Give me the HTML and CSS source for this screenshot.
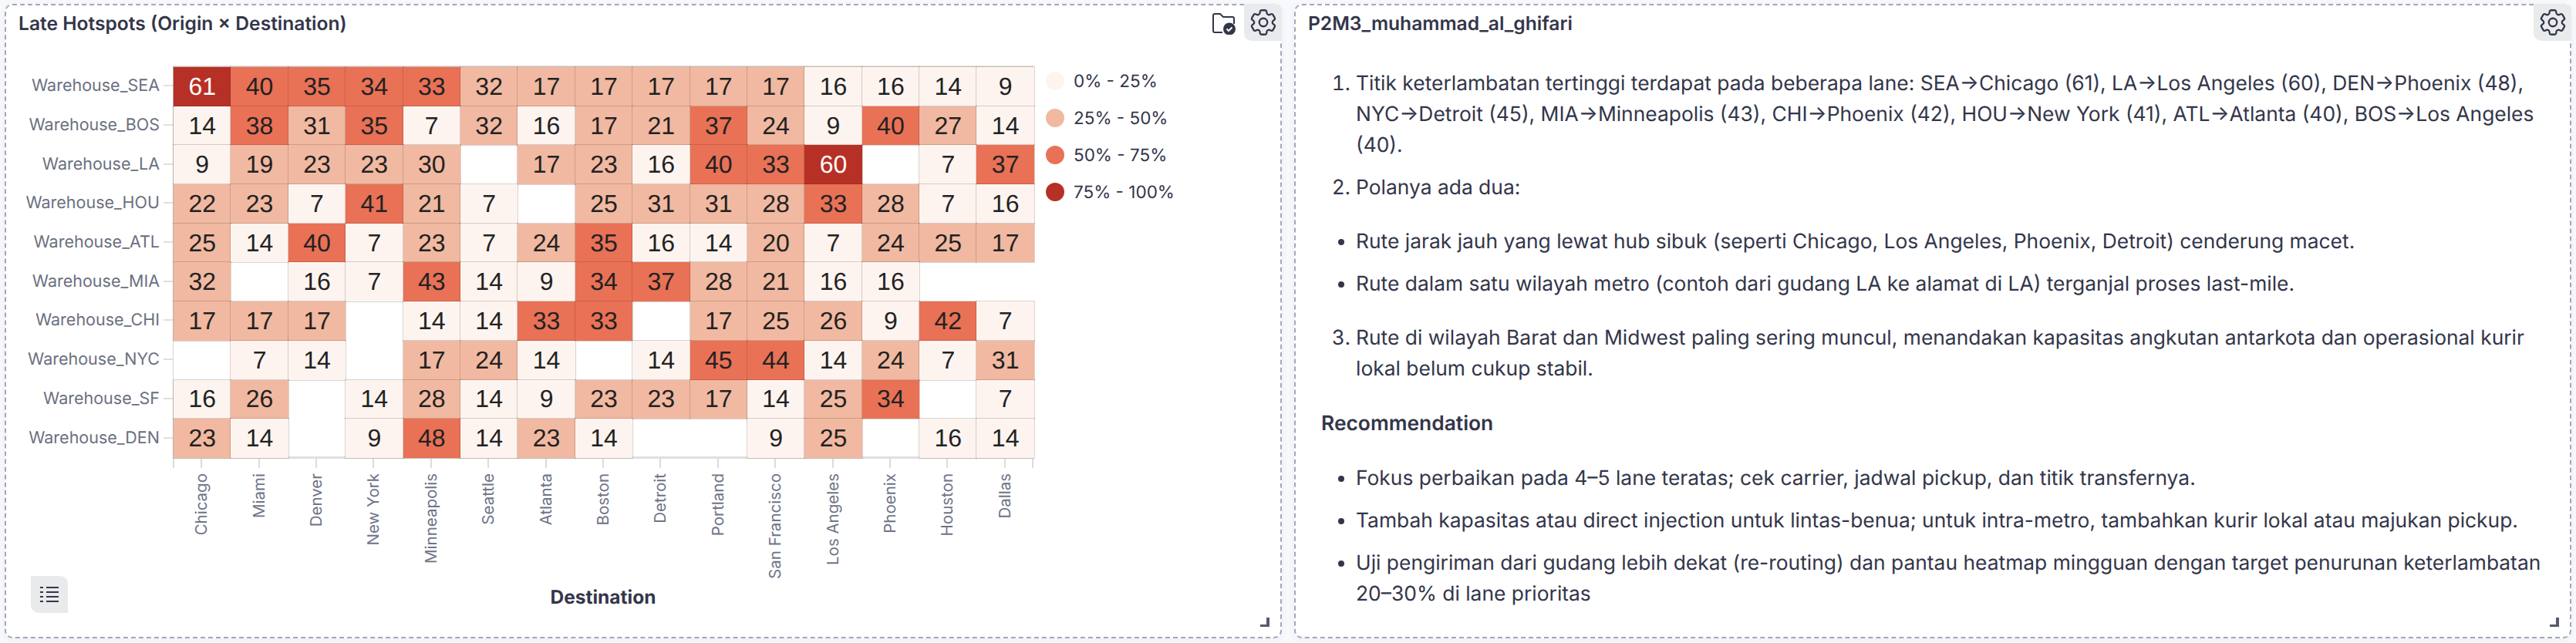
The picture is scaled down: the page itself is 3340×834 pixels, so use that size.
FILE: index.html
```html
<!DOCTYPE html>
<html lang="id">
<head>
    <meta charset="UTF-8">
    <meta name="viewport" content="width=device-width, initial-scale=1.0">
    <title>Late Hotspots</title>
    <link rel="stylesheet" href="styles.css">
</head>
<body>
    <section class="panel">
        <header class="panel-head">
            <h2 class="panel-title">Late Hotspots (Origin × Destination)</h2>
            <svg class="folder-icon" viewBox="0 0 30 28" fill="none">
                <path d="M13 25H3a2 2 0 0 1-2-2V3a2 2 0 0 1 2-2h7l4 4h12a2 2 0 0 1 2 2v7" stroke="#33364a" stroke-width="2"/>
                <circle cx="22" cy="20.500" r="8" fill="#33364a"/>
                <path d="M18.500 20.500l2.500 2.500 4.500-4.500" stroke="#fff" stroke-width="2"/>
            </svg>
            <button class="icon-btn" type="button">
                <svg class="gear-icon" viewBox="0 0 24 24" fill="none" stroke="#33364a" stroke-width="1.300">
                    <path d="M9.594 3.940c.09-.542.56-.94 1.110-.94h2.593c.55 0 1.020.398 1.110.94l.213 1.281c.063.374.313.686.645.87.074.04.147.083.22.127.325.196.72.257 1.075.124l1.217-.456a1.125 1.125 0 0 1 1.370.49l1.296 2.247a1.125 1.125 0 0 1-.26 1.431l-1.003.827c-.293.241-.438.613-.43.992a7.723 7.723 0 0 1 0 .255c-.008.378.137.75.43.991l1.004.827c.424.35.534.955.26 1.430l-1.298 2.247a1.125 1.125 0 0 1-1.369.491l-1.217-.456c-.355-.133-.75-.072-1.076.124a6.470 6.470 0 0 1-.22.128c-.331.183-.581.495-.644.869l-.213 1.281c-.09.543-.56.94-1.110.94h-2.594c-.55 0-1.019-.398-1.110-.94l-.213-1.281c-.062-.374-.312-.686-.644-.87a6.520 6.520 0 0 1-.22-.127c-.325-.196-.72-.257-1.076-.124l-1.217.456a1.125 1.125 0 0 1-1.369-.49l-1.297-2.247a1.125 1.125 0 0 1 .26-1.431l1.004-.827c.292-.24.437-.613.43-.991a6.932 6.932 0 0 1 0-.255c.007-.38-.138-.751-.43-.992l-1.004-.827a1.125 1.125 0 0 1-.26-1.430l1.297-2.247a1.125 1.125 0 0 1 1.370-.491l1.216.456c.356.133.751.072 1.076-.124.072-.044.146-.086.22-.128.332-.183.582-.495.644-.869l.214-1.280Z"/>
                    <path d="M15 12a3 3 0 1 1-6 0 3 3 0 0 1 6 0Z"/>
                </svg>
            </button>
        </header>

        <div class="chart">
            <div class="y-axis">
                <div class="y-row"><span>Warehouse_SEA</span><i></i></div>
                <div class="y-row"><span>Warehouse_BOS</span><i></i></div>
                <div class="y-row"><span>Warehouse_LA</span><i></i></div>
                <div class="y-row"><span>Warehouse_HOU</span><i></i></div>
                <div class="y-row"><span>Warehouse_ATL</span><i></i></div>
                <div class="y-row"><span>Warehouse_MIA</span><i></i></div>
                <div class="y-row"><span>Warehouse_CHI</span><i></i></div>
                <div class="y-row"><span>Warehouse_NYC</span><i></i></div>
                <div class="y-row"><span>Warehouse_SF</span><i></i></div>
                <div class="y-row"><span>Warehouse_DEN</span><i></i></div>
            </div>

            <div class="plot">
                <div class="heat-grid">
                    <!-- SEA -->
                    <div class="c c4">61</div><div class="c c3">40</div><div class="c c3">35</div><div class="c c3">34</div><div class="c c3">33</div><div class="c c2">32</div><div class="c c2">17</div><div class="c c2">17</div><div class="c c2">17</div><div class="c c2">17</div><div class="c c2">17</div><div class="c c1">16</div><div class="c c1">16</div><div class="c c1">14</div><div class="c c1">9</div>
                    <!-- BOS -->
                    <div class="c c1">14</div><div class="c c3">38</div><div class="c c2">31</div><div class="c c3">35</div><div class="c c1">7</div><div class="c c2">32</div><div class="c c1">16</div><div class="c c2">17</div><div class="c c2">21</div><div class="c c3">37</div><div class="c c2">24</div><div class="c c1">9</div><div class="c c3">40</div><div class="c c2">27</div><div class="c c1">14</div>
                    <!-- LA -->
                    <div class="c c1">9</div><div class="c c2">19</div><div class="c c2">23</div><div class="c c2">23</div><div class="c c2">30</div><div class="c"></div><div class="c c2">17</div><div class="c c2">23</div><div class="c c1">16</div><div class="c c3">40</div><div class="c c3">33</div><div class="c c4">60</div><div class="c"></div><div class="c c1">7</div><div class="c c3">37</div>
                    <!-- HOU -->
                    <div class="c c2">22</div><div class="c c2">23</div><div class="c c1">7</div><div class="c c3">41</div><div class="c c2">21</div><div class="c c1">7</div><div class="c"></div><div class="c c2">25</div><div class="c c2">31</div><div class="c c2">31</div><div class="c c2">28</div><div class="c c3">33</div><div class="c c2">28</div><div class="c c1">7</div><div class="c c1">16</div>
                    <!-- ATL -->
                    <div class="c c2">25</div><div class="c c1">14</div><div class="c c3">40</div><div class="c c1">7</div><div class="c c2">23</div><div class="c c1">7</div><div class="c c2">24</div><div class="c c3">35</div><div class="c c1">16</div><div class="c c1">14</div><div class="c c2">20</div><div class="c c1">7</div><div class="c c2">24</div><div class="c c2">25</div><div class="c c2">17</div>
                    <!-- MIA -->
                    <div class="c c2">32</div><div class="c"></div><div class="c c1">16</div><div class="c c1">7</div><div class="c c3">43</div><div class="c c1">14</div><div class="c c1">9</div><div class="c c3">34</div><div class="c c3">37</div><div class="c c2">28</div><div class="c c2">21</div><div class="c c1">16</div><div class="c c1">16</div><div class="c"></div><div class="c"></div>
                    <!-- CHI -->
                    <div class="c c2">17</div><div class="c c2">17</div><div class="c c2">17</div><div class="c"></div><div class="c c1">14</div><div class="c c1">14</div><div class="c c3">33</div><div class="c c3">33</div><div class="c"></div><div class="c c2">17</div><div class="c c2">25</div><div class="c c2">26</div><div class="c c1">9</div><div class="c c3">42</div><div class="c c1">7</div>
                    <!-- NYC -->
                    <div class="c"></div><div class="c c1">7</div><div class="c c1">14</div><div class="c"></div><div class="c c2">17</div><div class="c c2">24</div><div class="c c1">14</div><div class="c"></div><div class="c c1">14</div><div class="c c3">45</div><div class="c c3">44</div><div class="c c1">14</div><div class="c c2">24</div><div class="c c1">7</div><div class="c c2">31</div>
                    <!-- SF -->
                    <div class="c c1">16</div><div class="c c2">26</div><div class="c"></div><div class="c c1">14</div><div class="c c2">28</div><div class="c c1">14</div><div class="c c1">9</div><div class="c c2">23</div><div class="c c2">23</div><div class="c c2">17</div><div class="c c1">14</div><div class="c c2">25</div><div class="c c3">34</div><div class="c"></div><div class="c c1">7</div>
                    <!-- DEN -->
                    <div class="c c2">23</div><div class="c c1">14</div><div class="c"></div><div class="c c1">9</div><div class="c c3">48</div><div class="c c1">14</div><div class="c c2">23</div><div class="c c1">14</div><div class="c"></div><div class="c"></div><div class="c c1">9</div><div class="c c2">25</div><div class="c"></div><div class="c c1">16</div><div class="c c1">14</div>
                </div>

                <div class="x-axis">
                    <div class="x-col"><i></i><span>Chicago</span></div>
                    <div class="x-col"><i></i><span>Miami</span></div>
                    <div class="x-col"><i></i><span>Denver</span></div>
                    <div class="x-col"><i></i><span>New York</span></div>
                    <div class="x-col"><i></i><span>Minneapolis</span></div>
                    <div class="x-col"><i></i><span>Seattle</span></div>
                    <div class="x-col"><i></i><span>Atlanta</span></div>
                    <div class="x-col"><i></i><span>Boston</span></div>
                    <div class="x-col"><i></i><span>Detroit</span></div>
                    <div class="x-col"><i></i><span>Portland</span></div>
                    <div class="x-col"><i></i><span>San Francisco</span></div>
                    <div class="x-col"><i></i><span>Los Angeles</span></div>
                    <div class="x-col"><i></i><span>Phoenix</span></div>
                    <div class="x-col"><i></i><span>Houston</span></div>
                    <div class="x-col"><i></i><span>Dallas</span></div>
                </div>
                <div class="x-title">Destination</div>
            </div>

            <ul class="legend">
                <li><span class="dot c1"></span>0% - 25%</li>
                <li><span class="dot c2"></span>25% - 50%</li>
                <li><span class="dot c3"></span>50% - 75%</li>
                <li><span class="dot c4"></span>75% - 100%</li>
            </ul>
        </div>

        <button class="icon-btn list-btn" type="button">
            <svg viewBox="0 0 24 20" width="24" height="20" fill="#33364a">
                <rect x="0" y="0" width="4" height="2"/><rect x="8" y="0" width="16" height="2"/>
                <rect x="0" y="6" width="4" height="2"/><rect x="8" y="6" width="16" height="2"/>
                <rect x="0" y="12" width="4" height="2"/><rect x="8" y="12" width="16" height="2"/>
                <rect x="0" y="18" width="4" height="2"/><rect x="8" y="18" width="16" height="2"/>
            </svg>
        </button>
        <span class="resize-handle"></span>
    </section>

    <section class="panel">
        <header class="panel-head">
            <h2 class="panel-title">P2M3_muhammad_al_ghifari</h2>
            <button class="icon-btn" type="button">
                <svg class="gear-icon" viewBox="0 0 24 24" fill="none" stroke="#33364a" stroke-width="1.300">
                    <path d="M9.594 3.940c.09-.542.56-.94 1.110-.94h2.593c.55 0 1.020.398 1.110.94l.213 1.281c.063.374.313.686.645.87.074.04.147.083.22.127.325.196.72.257 1.075.124l1.217-.456a1.125 1.125 0 0 1 1.370.49l1.296 2.247a1.125 1.125 0 0 1-.26 1.431l-1.003.827c-.293.241-.438.613-.43.992a7.723 7.723 0 0 1 0 .255c-.008.378.137.75.43.991l1.004.827c.424.35.534.955.26 1.430l-1.298 2.247a1.125 1.125 0 0 1-1.369.491l-1.217-.456c-.355-.133-.75-.072-1.076.124a6.470 6.470 0 0 1-.22.128c-.331.183-.581.495-.644.869l-.213 1.281c-.09.543-.56.94-1.110.94h-2.594c-.55 0-1.019-.398-1.110-.94l-.213-1.281c-.062-.374-.312-.686-.644-.87a6.520 6.520 0 0 1-.22-.127c-.325-.196-.72-.257-1.076-.124l-1.217.456a1.125 1.125 0 0 1-1.369-.49l-1.297-2.247a1.125 1.125 0 0 1 .26-1.431l1.004-.827c.292-.24.437-.613.43-.991a6.932 6.932 0 0 1 0-.255c.007-.38-.138-.751-.43-.992l-1.004-.827a1.125 1.125 0 0 1-.26-1.430l1.297-2.247a1.125 1.125 0 0 1 1.370-.491l1.216.456c.356.133.751.072 1.076-.124.072-.044.146-.086.22-.128.332-.183.582-.495.644-.869l.214-1.280Z"/>
                    <path d="M15 12a3 3 0 1 1-6 0 3 3 0 0 1 6 0Z"/>
                </svg>
            </button>
        </header>

        <div class="notes">
            <ol>
                <li>Titik keterlambatan tertinggi terdapat pada beberapa lane: SEA→Chicago (61), LA→Los Angeles (60), DEN→Phoenix (48), NYC→Detroit (45), MIA→Minneapolis (43), CHI→Phoenix (42), HOU→New York (41), ATL→Atlanta (40), BOS→Los Angeles (40).</li>
                <li>Polanya ada dua:</li>
            </ol>
            <ul>
                <li>Rute jarak jauh yang lewat hub sibuk (seperti Chicago, Los Angeles, Phoenix, Detroit) cenderung macet.</li>
                <li>Rute dalam satu wilayah metro (contoh dari gudang LA ke alamat di LA) terganjal proses last-mile.</li>
            </ul>
            <ol start="3">
                <li>Rute di wilayah Barat dan Midwest paling sering muncul, menandakan kapasitas angkutan antarkota dan operasional kurir lokal belum cukup stabil.</li>
            </ol>
            <h3>Recommendation</h3>
            <ul>
                <li>Fokus perbaikan pada 4–5 lane teratas; cek carrier, jadwal pickup, dan titik transfernya.</li>
                <li>Tambah kapasitas atau direct injection untuk lintas-benua; untuk intra-metro, tambahkan kurir lokal atau majukan pickup.</li>
                <li>Uji pengiriman dari gudang lebih dekat (re-routing) dan pantau heatmap mingguan dengan target penurunan keterlambatan 20–30% di lane prioritas</li>
            </ul>
        </div>
        <span class="resize-handle"></span>
    </section>
</body>
</html>
```

FILE: styles.css
```css
* {
    box-sizing: border-box;
}
html, body {
    height: 100%;
}
body {
    margin: 0;
    padding: 5px 6px 6px;
    display: flex;
    gap: 16px;
    background-color: #f8f9fc;
    font-family: Inter, "Liberation Sans", sans-serif;
    text-rendering: geometricPrecision;
    color: #33364a;
    overflow: hidden;
}

/* panels */
.panel {
    position: relative;
    flex: 1;
    height: 823px;
    background-color: #fff;
    border: 2px dashed #a3a7ba;
    border-radius: 10px;
    box-shadow: 0 2px 8px rgba(90,100,150,0.08);
}
.panel-head {
    display: flex;
    align-items: flex-start;
    height: 46px;
}
.panel-title {
    flex: 1;
    margin: 0;
    padding: 8px 0 0 16px;
    font-size: 24.600px;
    line-height: 30px;
    font-weight: 600;
    color: #33364a;
}
.folder-icon {
    width: 30px;
    height: 28px;
    margin: 10px 11px 0 0;
}
.icon-btn {
    display: flex;
    align-items: center;
    justify-content: center;
    width: 49px;
    height: 48px;
    margin: -2px -2px 0 0;
    padding: 0;
    border: 0;
    border-radius: 0 10px 0 10px;
    background-color: #e9eaec;
}
.gear-icon {
    width: 42px;
    height: 42px;
}
.list-btn {
    position: absolute;
    left: 32px;
    bottom: 31px;
    width: 48px;
    margin: 0;
}
.resize-handle {
    position: absolute;
    right: 14px;
    bottom: 13px;
    width: 12px;
    height: 12px;
    border-right: 4px solid #565a6c;
    border-bottom: 3px solid #565a6c;
}

/* heatmap */
.chart {
    display: flex;
    align-items: flex-start;
    margin-top: 33px;
}
.y-axis {
    display: grid;
    grid-template-rows: repeat(10, 50.7px);
    width: 216px;
    flex: none;
}
.y-row {
    display: flex;
    align-items: center;
    justify-content: flex-end;
    gap: 5px;
    font-size: 21.500px;
    color: #6b7080;
}
.y-row i {
    width: 12px;
    height: 2px;
    background-color: #e0e0e0;
}
.plot {
    flex: none;
    width: 1116px;
}
.heat-grid {
    display: grid;
    grid-template-columns: repeat(15, 74.4px);
    grid-auto-rows: 50.7px;
    border-top: 2px solid #e6e2df;
    border-left: 1px solid #d6d6d6;
    border-bottom: 3px solid #e0e0e0;
    margin-top: -1px;
    height: 510px;
}
.c {
    display: flex;
    align-items: center;
    justify-content: center;
    font-family: "Liberation Sans", Arial, sans-serif;
    font-size: 32px;
    color: #222;
}
.c1, .c2, .c3, .c4 {
    box-shadow: 0 0 0 1px rgba(70,40,30,0.2);
}
.c1 {
    background-color: #fdf4f0;
}
.c2 {
    background-color: #f1b9a1;
}
.c3 {
    background-color: #e97156;
}
.c4 {
    background-color: #b73025;
    color: #fff;
}
.x-axis {
    display: grid;
    grid-template-columns: repeat(15, 1fr);
    height: 164px;
    background: linear-gradient(#dcdcdc, #dcdcdc) left top / 2px 12px no-repeat,
                linear-gradient(#dcdcdc, #dcdcdc) right top / 2px 12px no-repeat;
}
.x-col {
    display: flex;
    flex-direction: column;
    align-items: center;
}
.x-col i {
    flex: none;
    width: 2px;
    height: 12px;
    background-color: #dcdcdc;
}
.x-col span {
    margin-top: 7px;
    writing-mode: vertical-rl;
    transform: rotate(180deg);
    font-size: 20.500px;
    line-height: 24px;
    color: #6f7488;
}
.x-title {
    text-align: center;
    font-size: 24.500px;
    font-weight: 700;
    line-height: 30px;
    color: #33364a;
}
.legend {
    list-style: none;
    margin: -5px 0 0 16px;
    padding: 0;
}
.legend li {
    display: flex;
    align-items: center;
    gap: 12px;
    height: 48px;
    font-size: 22.500px;
    color: #33364a;
}
.dot {
    width: 24px;
    height: 24px;
    border-radius: 50%;
    box-shadow: none;
}

/* text panel */
.notes {
    margin-top: 35px;
    padding: 0 22px 0 33px;
    font-size: 26.400px;
    line-height: 40px;
    color: #33364a;
}
.notes ol, .notes ul {
    margin: 0;
    padding-left: 45px;
}
.notes ul {
    margin: 30px 0;
}
.notes li {
    margin-bottom: 15px;
}
.notes li:last-child {
    margin-bottom: 0;
}
.notes h3 {
    margin: 31px 0;
    font-size: 26.400px;
    font-weight: 600;
    line-height: 40px;
}
```
